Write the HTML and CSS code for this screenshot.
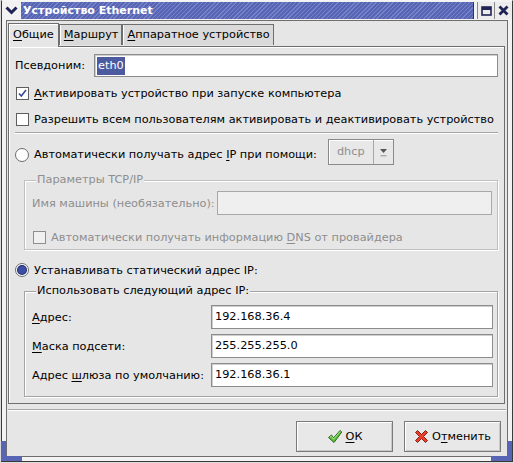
FILE: index.html
```html
<!DOCTYPE html>
<html>
<head>
<meta charset="utf-8">
<link rel="stylesheet" href="styles.css">
</head>
<body>
<div class="window">
  <div class="frame">
    <div class="titlebar">
      <div class="tb-menu">
        <svg width="13" height="9" viewBox="0 0 13 9"><path d="M1.5 1.5 L6.5 6.5 L11.5 1.5" fill="none" stroke="#1f2454" stroke-width="3"/></svg>
      </div>
      <div class="title">Устройство Ethernet</div>
      <div class="tb-btn">
        <svg width="11" height="10" viewBox="0 0 11 10"><rect x="1" y="1" width="9" height="8" fill="none" stroke="#1f2454" stroke-width="1.6"/><rect x="1" y="1" width="9" height="3" fill="#1f2454"/></svg>
      </div>
      <div class="tb-btn tb-close">
        <svg width="11" height="11" viewBox="0 0 11 11"><path d="M1.5 1.5 L9.5 9.5 M9.5 1.5 L1.5 9.5" stroke="#1f2454" stroke-width="2.8"/></svg>
      </div>
    </div>
    <div class="client">
      <div class="tabs">
        <div class="tab active"><u>О</u>бщие</div>
        <div class="tab"><u>М</u>аршрут</div>
        <div class="tab"><u>А</u>ппаратное устройство</div>
      </div>
      <div class="page">
        <div class="row row-alias">
          <div class="lbl lbl-alias">Псевдоним:</div>
          <div class="entry entry-alias"><span class="sel">eth0</span></div>
        </div>
        <div class="check-row cr1">
          <span class="check"><svg width="11" height="11" viewBox="0 0 11 11"><path d="M2 5.5 L4.3 8 L9 2" fill="none" stroke="#3a4a9a" stroke-width="1.6"/></svg></span>
          <span><u>А</u>ктивировать устройство при запуске компьютера</span>
        </div>
        <div class="check-row cr2">
          <span class="check"></span>
          <span>Разрешить всем пользователям активировать и деактивировать устройство</span>
        </div>
        <div class="separator"></div>
        <div class="radio-row rr1">
          <span class="radio"></span>
          <span class="rtext">Автоматически получать адрес <u>I</u>P при помощи:</span>
          <div class="combo">
            <span class="combo-text">dhcp</span>
            <span class="combo-btn"><svg width="9" height="9" viewBox="0 0 9 9"><path d="M1 1 L8 1 L4.5 5 Z" fill="#555"/><rect x="1.5" y="7" width="6" height="1.4" fill="#aaa"/></svg></span>
          </div>
        </div>
        <div class="group g1">
          <div class="group-title dim">Параметры TCP/IP</div>
          <div class="row host-row">
            <div class="lbl dim host-lbl">Имя машины (необязательно):</div>
            <div class="entry entry-dis"></div>
          </div>
          <div class="check-row dns-row dim">
            <span class="check check-dis"></span>
            <span>Автоматически получать информацию <u>D</u>NS от провайдера</span>
          </div>
        </div>
        <div class="radio-row rr2">
          <span class="radio on"><span class="dot"></span></span>
          <span>Устанавливать статический адрес IP:</span>
        </div>
        <div class="group g2">
          <div class="group-title">Использовать следующий адрес IP:</div>
          <div class="row ip-row first">
            <div class="lbl ip-lbl"><u>А</u>дрес:</div>
            <div class="entry">192.168.36.4</div>
          </div>
          <div class="row ip-row">
            <div class="lbl ip-lbl"><u>М</u>аска подсети:</div>
            <div class="entry">255.255.255.0</div>
          </div>
          <div class="row ip-row">
            <div class="lbl ip-lbl">Адрес <u>ш</u>люза по умолчанию:</div>
            <div class="entry">192.168.36.1</div>
          </div>
        </div>
      </div>
      <div class="separator bottom-sep"></div>
      <div class="buttons">
        <div class="button">
          <svg width="16" height="15" viewBox="0 0 16 15"><path d="M1.5 8.5 L4.5 6 L6.5 9 L13 1.5 L14.8 3 L7 13.5 Z" fill="#5cbf3a" stroke="#2d6a1e" stroke-width="1" stroke-linejoin="round"/><path d="M3 8.3 L4.5 7.2 L6.6 10.2 L13 2.6" fill="none" stroke="#b8f0a0" stroke-width="0.8"/></svg>
          <span><u>О</u>К</span>
        </div>
        <div class="button">
          <svg width="15" height="15" viewBox="0 0 15 15"><path d="M1.5 3.5 L3.5 1.5 L7.5 5.5 L11.5 1.5 L13.5 3.5 L9.5 7.5 L13.5 11.5 L11.5 13.5 L7.5 9.5 L3.5 13.5 L1.5 11.5 L5.5 7.5 Z" fill="#e8402c" stroke="#8a1c10" stroke-width="1" stroke-linejoin="round"/></svg>
          <span>О<u>т</u>менить</span>
        </div>
      </div>
    </div>
  </div>
  <div class="corner corner-l"></div>
  <div class="corner corner-r"></div>
</div>
</body>
</html>
```
FILE: styles.css
```css
* { box-sizing: border-box; }
html, body { margin: 0; padding: 0; background: #e6e6e6; }
body {
  font-family: "DejaVu Sans", "Noto Sans", sans-serif;
  font-size: 11.3px;
  color: #000;
}
u { text-decoration: underline; text-underline-offset: 2px; }

.window {
  position: relative;
  width: 514px;
  height: 463px;
  padding: 0 1px 1px 1px;
  background: #dcdcdc;
}
.frame {
  height: 462px;
  border: 1px solid #3a3a3a;
  border-top: 1px solid #f4f4f4;
  background: #f2f2f2;
  display: flex;
  flex-direction: column;
}

.titlebar {
  height: 18px;
  display: flex;
  align-items: stretch;
  padding-top: 1px;
}
.tb-menu {
  width: 19px;
  display: flex;
  align-items: center;
  justify-content: center;
}
.title {
  flex: 1;
  background: repeating-linear-gradient(135deg, #5864b4 0px, #5864b4 2px, #7783c8 2px, #7783c8 3px);
  color: #fff;
  font-weight: bold;
  font-size: 11px;
  line-height: 17px;
  padding-left: 2px;
  margin-right: 3px;
  border-right: 1px solid #2b3270;
}
.tb-btn {
  width: 17px;
  display: flex;
  align-items: center;
  justify-content: center;
  border-left: 1px solid #8a8a8a;
  background: #ececec;
}
.tb-close { width: 18px; }

.client {
  flex: 1;
  margin: 1px 4px 4px 4px;
  border: 1px solid #6e6e6e;
  background: #e6e6e6;
  display: flex;
  flex-direction: column;
  padding: 2px 1px 0 1px;
}

.tabs {
  display: flex;
  align-items: flex-end;
  height: 23px;
  position: relative;
  z-index: 1;
}
.tab {
  height: 21px;
  padding: 0 3px 0 4px;
  line-height: 20px;
  border: 1px solid #6e6e6e;
  border-bottom: none;
  border-left: 1px solid #fff;
  box-shadow: inset 1px 0 0 #fff;
  background: #dadada;
  margin-bottom: 1px;
  white-space: nowrap;
}
.tab + .tab { border-left: 1px solid #6e6e6e; }
.tab.active {
  height: 24px;
  margin-bottom: -1px;
  padding: 0 4px 0 4px;
  line-height: 22px;
  background: #e6e6e6;
  border-left: 1px solid #6e6e6e;
  box-shadow: inset 1px 1px 0 #fff;
}

.page {
  border: 1px solid #6e6e6e;
  box-shadow: inset 1px 1px 0 #fff;
  margin-right: 1px;
  padding: 7px 6px 6px 6px;
  display: flex;
  flex-direction: column;
}

.row { display: flex; align-items: center; }
.lbl { flex: none; white-space: nowrap; }
.lbl-alias { width: 79px; }
.row-alias { height: 23px; }
.entry {
  flex: 1;
  height: 100%;
  background: #fff;
  border: 1px solid #8c8c8c;
  box-shadow: inset 1px 1px 0 #cfcfcf;
  padding: 0 3px;
  line-height: 22px;
  white-space: nowrap;
}
.entry-alias { padding-left: 2px; line-height: 20px; padding-top: 1px; }
.sel {
  background: #4c5aa0;
  color: #fff;
  display: inline-block;
  line-height: 18px;
  padding: 0 1px;
}

.check-row {
  display: flex;
  align-items: center;
  gap: 5px;
  height: 20px;
  padding-left: 1px;
  white-space: nowrap;
}
.cr1 { margin-top: 6px; }
.cr2 { margin-top: 6px; }
.check {
  width: 13px;
  height: 13px;
  flex: none;
  background: #fff;
  border: 1px solid #5e5e5e;
  display: flex;
  align-items: center;
  justify-content: center;
}
.check-dis { border-color: #8e8e8e; background: #f0f0f0; }

.separator {
  height: 2px;
  border-top: 1px solid #a6a6a6;
  border-bottom: 1px solid #fff;
}
.page .separator { margin-top: 3px; }

.radio-row {
  display: flex;
  align-items: center;
  gap: 5px;
  white-space: nowrap;
}
.rr1 { margin-top: 5px; height: 26px; }
.rr1 .rtext { padding-top: 5px; margin-right: 6px; }
.radio {
  width: 14px;
  height: 14px;
  flex: none;
  border-radius: 50%;
  background: #fff;
  border: 1px solid #6c6c6c;
  display: flex;
  align-items: center;
  justify-content: center;
}
.rr1 .radio { margin-top: 5px; }
.dot {
  width: 8px;
  height: 8px;
  border-radius: 50%;
  background: #3b4fa6;
  box-shadow: 0 0 0 1px #1e2a66;
}

.combo {
  width: 66px;
  height: 26px;
  display: flex;
  border: 1px solid #8a8a8a;
  box-shadow: inset 1px 1px 0 #fff;
  background: #e8e8e8;
}
.combo-text {
  flex: 1;
  color: #8e8e8e;
  line-height: 24px;
  padding-left: 8px;
  border-right: 1px solid #a8a8a8;
}
.combo-btn {
  width: 19px;
  display: flex;
  align-items: center;
  justify-content: center;
}

.group {
  border: 1px solid #a4a4a4;
  box-shadow: inset 1px 1px 0 #fff, 1px 1px 0 #fff;
  margin-left: 9px;
}
.group-title {
  width: fit-content;
  margin-top: -8px;
  margin-left: 4px;
  padding: 0 1px;
  background: #e6e6e6;
  line-height: 14px;
}
.dim { color: #8e8e8e; }

.g1 { margin-top: 15px; padding: 0 5px 0 7px; height: 70px; border-color: #c0c0c0; }
.host-row { height: 24px; margin-top: 4px; }
.host-lbl { width: 185px; }
.entry-dis { background: #efefef; border-color: #a8a8a8; box-shadow: none; }
.dns-row { margin-top: 13px; height: 18px; padding-left: 1px; }

.rr2 { margin-top: 11px; height: 18px; }

.g2 { margin-top: 12px; padding: 0 4px 9px 7px; }
.ip-row { height: 24px; margin-top: 5px; }
.ip-row.first { margin-top: 7px; }
.ip-lbl { width: 179px; }

.bottom-sep { margin-top: 5px; }

.buttons {
  display: flex;
  justify-content: flex-end;
  gap: 11px;
  padding: 10px 5px 0 0;
}
.button {
  width: 97px;
  height: 31px;
  border: 1px solid #7a7a7a;
  box-shadow: inset 1px 1px 0 #fff, inset -1px -1px 0 #c8c8c8;
  background: #e8e8e8;
  display: flex;
  align-items: center;
  justify-content: center;
  gap: 3px;
}

.corner {
  position: absolute;
  background: #5864b4;
}
.corner-l {
  left: 1px;
  bottom: 2px;
  width: 5px;
  height: 20px;
}
.corner-l::after {
  content: "";
  position: absolute;
  left: 0;
  bottom: 0;
  width: 21px;
  height: 5px;
  background: #5864b4;
}
.corner-r {
  right: 2px;
  bottom: 2px;
  width: 5px;
  height: 20px;
}
.corner-r::after {
  content: "";
  position: absolute;
  right: 0;
  bottom: 0;
  width: 21px;
  height: 5px;
  background: #5864b4;
}
```
